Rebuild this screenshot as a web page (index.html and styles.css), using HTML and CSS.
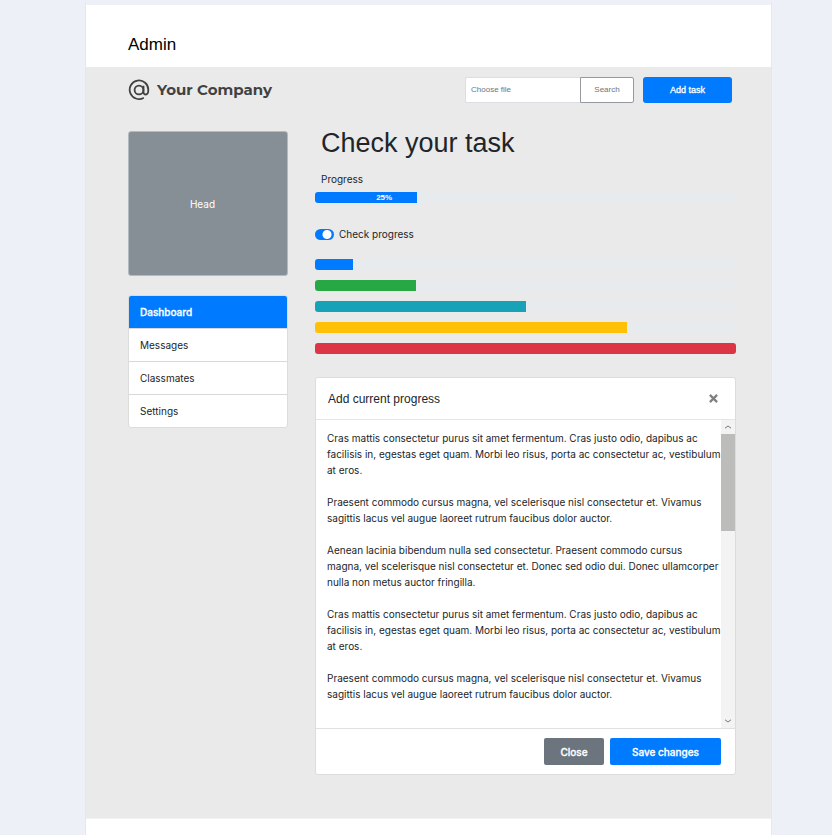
FILE: index.html
```html
<!DOCTYPE html>
<html lang="en">
<head>
  <meta charset="utf-8">
  <title>Admin</title>
  <meta name="viewport" content="width=device-width, initial-scale=1">
  <link rel="stylesheet" href="styles.css">
</head>
<body>
  <div class="page">
    <header class="page-title">Admin</header>

    <div class="workspace">
      <div class="topbar">
        <a class="brand" href="#">
          <svg class="brand-icon" viewBox="0 0 22 22" aria-hidden="true">
            <path d="M15.8 18.7A9.3 9.3 0 1 1 20.3 11c0 3.2-.9 4.5-2.5 4.5-1.500 0-2.300-.9-2.300-2.700V6.700"/>
            <circle cx="11" cy="11" r="4.400"/>
          </svg>
          <span>Your Company</span>
        </a>
        <form class="actions">
          <div class="search">
            <input type="text" placeholder="Choose file" aria-label="Choose file">
            <button type="button">Search</button>
          </div>
          <button class="btn btn-add" type="button">Add task</button>
        </form>
      </div>

      <div class="columns">
        <aside class="sidebar">
          <div class="head-box">Head</div>
          <nav class="menu">
            <a class="active" href="#">Dashboard</a>
            <a href="#">Messages</a>
            <a href="#">Classmates</a>
            <a href="#">Settings</a>
          </nav>
        </aside>

        <main class="content">
          <h1>Check your task</h1>
          <p class="progress-label">Progress</p>
          <div class="progress"><div class="bar bar-label" style="width:24.3%">25%</div></div>

          <label class="switch">
            <input type="checkbox" checked>
            <span>Check progress</span>
          </label>

          <div class="bars">
            <div class="progress"><div class="bar" style="width:9%"></div></div>
            <div class="progress"><div class="bar green" style="width:24%"></div></div>
            <div class="progress"><div class="bar teal" style="width:50%"></div></div>
            <div class="progress"><div class="bar yellow" style="width:74%"></div></div>
            <div class="progress"><div class="bar red" style="width:100%"></div></div>
          </div>

          <section class="dialog" aria-labelledby="dialog-title">
            <header class="dialog-header">
              <h2 id="dialog-title">Add current progress</h2>
              <button class="dismiss" type="button" aria-label="Close dialog">
                <svg viewBox="0 0 8 8" aria-hidden="true"><path d="M.8.8l6.400 6.400M7.200.8L.8 7.200"/></svg>
              </button>
            </header>
            <div class="dialog-body">
              <div class="dialog-text">
                <p>Cras mattis consectetur purus sit amet fermentum. Cras justo odio, dapibus ac facilisis in, egestas eget quam. Morbi leo risus, porta ac consectetur ac, vestibulum at eros.</p>
                <p>Praesent commodo cursus magna, vel scelerisque nisl consectetur et. Vivamus sagittis lacus vel augue laoreet rutrum faucibus dolor auctor.</p>
                <p>Aenean lacinia bibendum nulla sed consectetur. Praesent commodo cursus<br>magna, vel scelerisque nisl consectetur et. Donec sed odio dui. Donec ullamcorper nulla non metus auctor fringilla.</p>
                <p>Cras mattis consectetur purus sit amet fermentum. Cras justo odio, dapibus ac facilisis in, egestas eget quam. Morbi leo risus, porta ac consectetur ac, vestibulum at eros.</p>
                <p>Praesent commodo cursus magna, vel scelerisque nisl consectetur et. Vivamus sagittis lacus vel augue laoreet rutrum faucibus dolor auctor.</p>
              </div>
              <div class="scrollbar" aria-hidden="true">
                <svg viewBox="0 0 8 4"><path d="M1 3.200l3-2.200 3 2.200"/></svg>
                <div class="track"><div class="thumb"></div></div>
                <svg viewBox="0 0 8 4"><path d="M1 .8l3 2.200 3-2.200"/></svg>
              </div>
            </div>
            <footer class="dialog-footer">
              <button class="btn btn-close" type="button">Close</button>
              <button class="btn btn-save" type="button">Save changes</button>
            </footer>
          </section>
        </main>
      </div>
    </div>
  </div>
</body>
</html>
```
FILE: styles.css
```css
* {
  box-sizing: border-box;
}

body {
  margin: 0;
  background: #edf0f6;
  color: #212529;
  font-family: Inter, "Liberation Sans", Arial, sans-serif;
  font-size: 10px;
  line-height: 16px;
}

h1, h2, p {
  margin: 0;
  font-weight: 400;
}

button, input {
  font: inherit;
  color: inherit;
}

button {
  cursor: pointer;
}

a {
  color: inherit;
  text-decoration: none;
}

.page {
  min-height: 100vh;
  margin: 0 60px 0 85px;
  border: solid #e4e7ec;
  border-width: 0 1px;
  border-top: 5px solid #edf0f6;
  background: #fff;
}

.page-title {
  padding: 29px 42px 11px;
  color: #000;
  font-family: "Liberation Sans", Arial, sans-serif;
  font-size: 17px;
  line-height: 22px;
}

.workspace {
  padding: 10px 35px 43px 42px;
  border-bottom: 1px solid #f2f2f2;
  background: #eaeaea;
}

.topbar {
  display: flex;
  align-items: center;
  justify-content: space-between;
  margin-bottom: 28px;
  padding-right: 4px;
}

.brand {
  display: flex;
  align-items: center;
  gap: 7px;
  color: #414141;
  font-family: Montserrat, "Open Sans", sans-serif;
  font-size: 15px;
  font-weight: 700;
}

.brand-icon {
  width: 22px;
  height: 22px;
  fill: none;
  stroke: currentColor;
  stroke-width: 1.8;
}

.actions {
  display: flex;
  gap: 9px;
}

.search {
  display: flex;
  height: 26px;
  color: #6c757d;
  font-family: "Liberation Sans", Arial, sans-serif;
  font-size: 8px;
}

.search input {
  width: 115px;
  padding: 0 5px;
  border: 1px solid #dbdfe3;
  border-right: 0;
  border-radius: 2px 0 0 2px;
  background: #fff;
}

.search input::placeholder {
  color: #6c757d;
  opacity: 1;
}

.search button {
  width: 54px;
  padding: 0;
  border: 1px solid #949a9f;
  border-radius: 0 2px 2px 0;
  background: #fff;
}

.btn {
  height: 27px;
  padding: 0;
  border: 0;
  border-radius: 2px;
  background: #007bff;
  color: #fff;
  font-weight: 500;
  -webkit-text-stroke: 0.3px currentColor;
}

.btn-add {
  width: 89px;
  height: 26px;
  border-radius: 3px;
  font-family: "Liberation Sans", Arial, sans-serif;
  font-size: 9px;
}

.columns {
  display: grid;
  grid-template-columns: 160px minmax(0, 1fr);
  gap: 27px;
}

.head-box {
  display: flex;
  align-items: center;
  justify-content: center;
  height: 145px;
  margin-bottom: 19px;
  padding-right: 11px;
  border: 1px solid #b3bbc1;
  border-radius: 3px;
  background: #868e96;
  color: #fff;
}

.menu {
  overflow: hidden;
  border: 1px solid #dcdcdc;
  border-radius: 3px;
  background: #fff;
}

.menu a {
  display: block;
  padding: 8px 11px;
}

.menu a + a {
  border-top: 1px solid #d8d8d8;
}

.menu .active {
  background: #007bff;
  color: #fff;
  font-weight: 500;
  -webkit-text-stroke: 0.3px currentColor;
}

h1 {
  padding-left: 6px;
  margin: -4px 0 12px;
  font-family: "Liberation Sans", Arial, sans-serif;
  font-size: 27px;
  line-height: 32px;
}

.progress-label {
  padding-left: 6px;
  margin-bottom: 5px;
}

.progress {
  overflow: hidden;
  height: 11px;
  border-radius: 3px;
  background: #e7ebee;
}

.bar {
  height: 100%;
  background: #007bff;
}

.bar-label {
  padding-left: 36px;
  color: #fff;
  font-family: "Liberation Sans", Arial, sans-serif;
  font-size: 8px;
  font-weight: 700;
  line-height: 11px;
  text-align: center;
}

.green { background: #28a745; }
.teal { background: #17a2b8; }
.yellow { background: #ffc107; }
.red { background: #dc3545; }

.switch {
  display: flex;
  align-items: center;
  gap: 5px;
  margin: 23px 0 17px;
}

.switch input {
  width: 19px;
  height: 11px;
  margin: 0;
  appearance: none;
  border-radius: 6px;
  background: radial-gradient(circle at 12px 50%, #fff 4px, #007bff 5px);
}

.bars {
  display: grid;
  gap: 10px;
}

.dialog {
  margin-top: 23px;
  border: 1px solid #dcdcdc;
  border-radius: 3px;
  background: #fff;
}

.dialog-header {
  display: flex;
  align-items: center;
  justify-content: space-between;
  height: 42px;
  padding: 0 17px 0 12px;
  border-bottom: 1px solid #e5e5e5;
}

.dialog-header h2 {
  font-family: "Liberation Sans", Arial, sans-serif;
  font-size: 12px;
}

.dismiss {
  display: flex;
  padding: 0;
  border: 0;
  background: none;
}

.dismiss svg {
  width: 9px;
  height: 9px;
  fill: none;
  stroke: #808080;
  stroke-width: 2;
}

.dialog-body {
  display: flex;
  height: 308px;
}

.dialog-text {
  display: flex;
  flex: 1;
  flex-direction: column;
  gap: 16px;
  overflow: hidden;
  padding: 10px 0 0 11px;
}

.scrollbar {
  display: flex;
  flex: none;
  flex-direction: column;
  align-items: center;
  width: 14px;
  background: #f3f3f3;
}

.scrollbar svg {
  width: 8px;
  height: 4px;
  margin: 5px 0;
  fill: none;
  stroke: #777;
}

.track {
  flex: 1;
  align-self: stretch;
}

.thumb {
  height: 97px;
  background: #bcbcba;
}

.dialog-footer {
  display: flex;
  justify-content: flex-end;
  gap: 6px;
  padding: 9px 14px;
  border-top: 1px solid #e0e0e0;
}

.btn-close {
  width: 60px;
  background: #6c757d;
}

.btn-save {
  width: 111px;
}
```
